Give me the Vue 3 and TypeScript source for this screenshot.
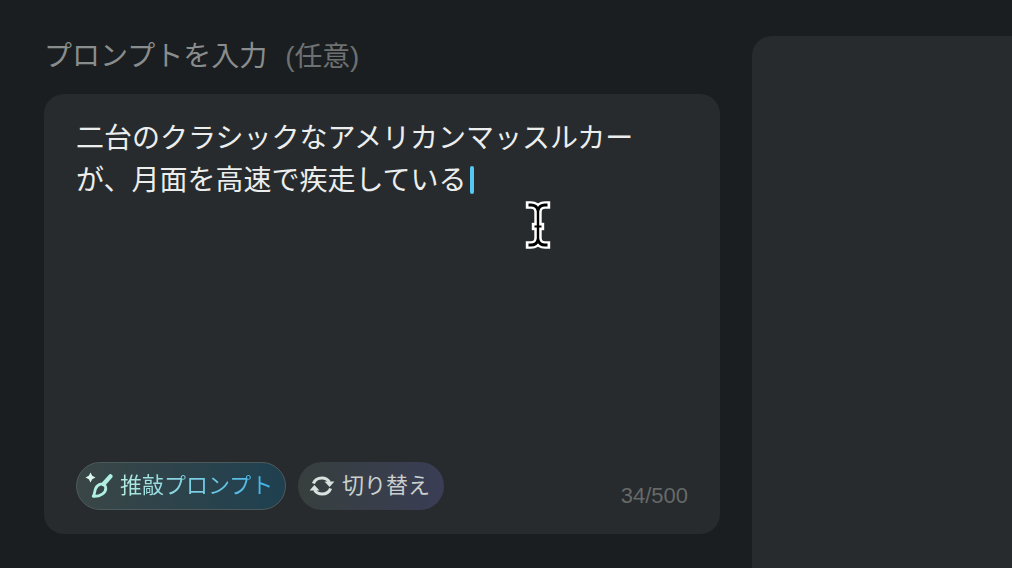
<script setup lang="ts">
const text: string = '二台のクラシックなアメリカンマッスルカーが、月面を高速で疾走している'
const count: string = `${text.length}/500`
</script>

<template>
  <div class="page">
    <section class="left">
      <h2 class="label">プロンプトを入力<span class="opt">(任意)</span></h2>
      <div class="card">
        <p class="prompt">{{ text }}<span class="caret"></span></p>
        <div class="foot">
          <button class="chip chip-a">
            <svg class="ico" width="28" height="28" viewBox="0 0 28 28" fill="none">
              <path d="M5.5 0.5 L7.2 3.8 L10.5 5.5 L7.2 7.2 L5.5 10.5 L3.8 7.2 L0.5 5.5 L3.8 3.8 Z" fill="#d9f5ec" />
              <path d="M18.6 12 L25.4 4.4" stroke="#b0f0e2" stroke-width="4.4" stroke-linecap="round" />
              <path d="M15.6 12.2 C18.2 11.6 20.6 13.4 20.8 16 C21 20.8 15.4 24.8 8.2 24.4 C9.8 22 9.4 19.4 10.6 16.6 C11.6 14.2 13.4 12.8 15.6 12.2 Z" stroke="#b0f0e2" stroke-width="2.8" stroke-linejoin="round" />
            </svg>
            <span class="grad">推敲プロンプト</span>
          </button>
          <button class="chip chip-b">
            <svg class="ico" width="26" height="26" viewBox="0 0 26 26" fill="none">
              <path d="M4.4 10.5 C5.8 6.8 9 5 13 5 C16.2 5 18.8 6.4 20.4 9" stroke="#d8e2de" stroke-width="3.2" />
              <path d="M15.5 8.4 H25.4 L20.6 14 Z" fill="#d8e2de" />
              <g transform="rotate(180 13 13)">
                <path d="M4.4 10.5 C5.8 6.8 9 5 13 5 C16.2 5 18.8 6.4 20.4 9" stroke="#d8e2de" stroke-width="3.2" />
                <path d="M15.5 8.4 H25.4 L20.6 14 Z" fill="#d8e2de" />
              </g>
            </svg>
            <span>切り替え</span>
          </button>
          <span class="count">{{ count }}</span>
        </div>
      </div>
    </section>
    <aside class="right"></aside>
    <svg class="cursor" width="30" height="52" viewBox="0 0 30 52" fill="none">
      <g stroke="#fff" stroke-width="7.4" stroke-linejoin="round" stroke-linecap="square">
        <path d="M6.5 6 H8 C11 6 14 7.5 15 11 C16 7.5 19 6 22 6 H23.5" />
        <path d="M6.5 46 H8 C11 46 14 44.5 15 41 C16 44.5 19 46 22 46 H23.5" />
        <path d="M15 11 V41" />
        <path d="M12.5 27.5 H17.5" />
      </g>
      <g stroke="#000" stroke-width="2.8" stroke-linecap="butt">
        <path d="M5.5 6 H8 C11 6 14 7.5 15 11 C16 7.5 19 6 22 6 H24.5" />
        <path d="M5.5 46 H8 C11 46 14 44.5 15 41 C16 44.5 19 46 22 46 H24.5" />
        <path d="M15 10 V42" stroke-width="2.4" />
        <path d="M11.5 27.5 H18.5" stroke-width="2" />
      </g>
    </svg>
  </div>
</template>

<style>
html, body { margin: 0; background: #1a1e20; }
</style>

<style scoped>
.page {
  position: relative;
  width: 1012px;
  height: 568px;
  overflow: hidden;
  box-sizing: border-box;
  padding: 36px 0 0 44px;
  display: flex;
  gap: 32px;
  background: #1a1e20;
  font-family: "Noto Sans CJK JP", "Liberation Sans", sans-serif;
}
.left { width: 676px; flex: none; }
.label {
  margin: 0;
  height: 58px;
  line-height: 37px;
  font-size: 28px;
  font-weight: 400;
  color: #8a8d8e;
}
.opt {
  margin-left: 18px;
  font-size: 27.8px;
  color: #6e7172;
  font-family: "Liberation Sans", "Noto Sans CJK JP", sans-serif;
}
.card {
  height: 440px;
  box-sizing: border-box;
  border-radius: 20px;
  background: #272b2d;
  padding: 21px 32px 24px 32px;
  display: flex;
  flex-direction: column;
  justify-content: space-between;
}
.prompt {
  margin: 0;
  width: 570px;
  font-size: 28px;
  line-height: 42px;
  color: #eceeee;
}
.caret {
  display: inline-block;
  width: 4.5px;
  height: 28px;
  margin-left: 3px;
  vertical-align: -4px;
  border-radius: 2px;
  background: #54c8f2;
}
.foot { display: flex; align-items: flex-end; gap: 12px; }
.chip {
  height: 48px;
  box-sizing: border-box;
  display: flex;
  align-items: center;
  border-radius: 24px;
  font: inherit;
  font-size: 22px;
  line-height: 42px;
  padding: 0;
  white-space: nowrap;
}
.chip-a {
  width: 210px;
  padding-left: 8px;
  gap: 7px;
  background: linear-gradient(90deg, #3a4646 0%, #1f4050 100%);
  border: 1.5px solid #4d5a5c;
}
.chip-b {
  width: 146px;
  padding-left: 11px;
  gap: 7px;
  border: 0;
  color: #c9d0ce;
  background: linear-gradient(90deg, #373f3e 0%, #3a3d55 100%);
}
.chip span { position: relative; top: -3px; }
.ico { flex: none; }
.grad {
  background: linear-gradient(90deg, #b5ebe0 0%, #3fb2ea 100%);
  -webkit-background-clip: text;
  background-clip: text;
  color: transparent;
}
.count {
  margin-left: auto;
  font-family: "Liberation Sans", sans-serif;
  font-size: 22px;
  line-height: 28px;
  color: #66696a;
}
.right {
  flex: 1;
  height: 560px;
  border-radius: 20px 0 0 0;
  background: #272b2d;
}
.cursor {
  position: absolute;
  left: 523px;
  top: 199px;
}
</style>
